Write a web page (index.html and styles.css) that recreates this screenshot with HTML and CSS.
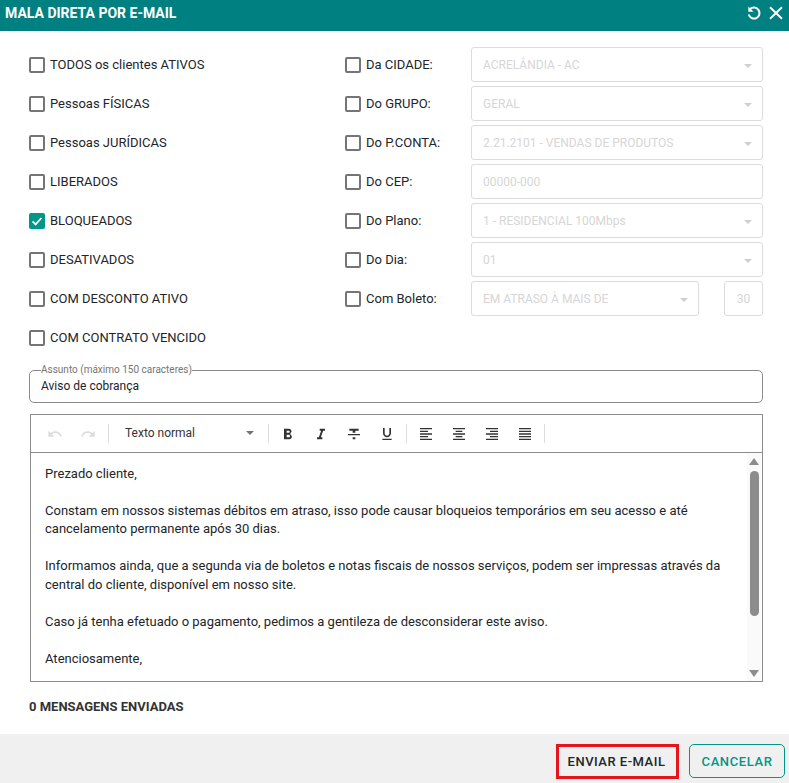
FILE: index.html
```html
<!DOCTYPE html>
<html lang="pt-BR">
<head>
<meta charset="utf-8">
<title>Mala direta por e-mail</title>
<link rel="stylesheet" href="styles.css">
</head>
<body>
<div class="dialog">
  <header class="title-bar">
    <h1 class="title">MALA DIRETA POR E-MAIL</h1>
    <div class="title-actions">
      <svg class="icon-reset" viewBox="0 0 16 16" width="16" height="16"><path d="M4 4.300A5.500 5.500 0 1 1 2.700 9.600" fill="none" stroke="#fff" stroke-width="2"/><path d="M2.300 1.400v5.300h5.300z" fill="#fff"/></svg>
      <svg class="icon-close" viewBox="0 0 14 14" width="14" height="14"><path d="M1 1.200l12 11.600M13 1.200L1 12.800" fill="none" stroke="#fff" stroke-width="1.900"/></svg>
    </div>
  </header>

  <main class="content">
    <section class="filters">
      <div class="col-left">
        <label class="check-row"><span class="box"></span>TODOS os clientes ATIVOS</label>
        <label class="check-row"><span class="box"></span>Pessoas FÍSICAS</label>
        <label class="check-row"><span class="box"></span>Pessoas JURÍDICAS</label>
        <label class="check-row"><span class="box"></span>LIBERADOS</label>
        <label class="check-row"><span class="box checked"><svg viewBox="0 0 16 16" width="16" height="16"><path d="M3.600 8.400l3 3 5.800-6.400" fill="none" stroke="#fff" stroke-width="1.700"/></svg></span>BLOQUEADOS</label>
        <label class="check-row"><span class="box"></span>DESATIVADOS</label>
        <label class="check-row"><span class="box"></span>COM DESCONTO ATIVO</label>
        <label class="check-row"><span class="box"></span>COM CONTRATO VENCIDO</label>
      </div>
      <div class="col-right">
        <div class="field-row"><label class="check-row field-label"><span class="box"></span>Da CIDADE:</label><div class="control">ACRELÂNDIA - AC<i class="caret"></i></div></div>
        <div class="field-row"><label class="check-row field-label"><span class="box"></span>Do GRUPO:</label><div class="control">GERAL<i class="caret"></i></div></div>
        <div class="field-row"><label class="check-row field-label"><span class="box"></span>Do P.CONTA:</label><div class="control">2.21.2101 - VENDAS DE PRODUTOS<i class="caret"></i></div></div>
        <div class="field-row"><label class="check-row field-label"><span class="box"></span>Do CEP:</label><div class="control">00000-000</div></div>
        <div class="field-row"><label class="check-row field-label"><span class="box"></span>Do Plano:</label><div class="control">1 - RESIDENCIAL 100Mbps<i class="caret"></i></div></div>
        <div class="field-row"><label class="check-row field-label"><span class="box"></span>Do Dia:</label><div class="control">01<i class="caret"></i></div></div>
        <div class="field-row"><label class="check-row field-label"><span class="box"></span>Com Boleto:</label><div class="control">EM ATRASO À MAIS DE<i class="caret"></i></div><div class="control days">30</div></div>
      </div>
    </section>

    <fieldset class="subject">
      <legend class="subject-legend">Assunto (máximo 150 caracteres)</legend>
      <div class="subject-value">Aviso de cobrança</div>
    </fieldset>

    <section class="editor">
      <div class="toolbar">
        <div class="tool-group history">
          <svg class="tool" viewBox="0 0 24 24"><path fill="#ddd" d="M12.500 8c-2.650 0-5.050.990-6.900 2.600L2 7v9h9l-3.620-3.620c1.390-1.160 3.160-1.880 5.120-1.880 3.540 0 6.550 2.310 7.600 5.500l2.370-.780C21.080 11.030 17.150 8 12.500 8z"/></svg>
          <svg class="tool" viewBox="0 0 24 24"><path fill="#ddd" d="M18.400 10.600C16.550 8.990 14.150 8 11.500 8c-4.650 0-8.580 3.030-9.960 7.220L3.900 16c1.050-3.190 4.050-5.500 7.600-5.500 1.950 0 3.730.720 5.120 1.880L13 16h9V7l-3.600 3.600z"/></svg>
        </div>
        <div class="tool-group block-type">Texto normal<i class="caret dark"></i></div>
        <div class="tool-group wide">
          <svg class="tool" viewBox="0 0 24 24"><path fill="#333" d="M15.600 10.790c.970-.670 1.650-1.770 1.650-2.790 0-2.260-1.750-4-4-4H6v16h8.040c2.090 0 3.710-1.700 3.710-3.790 0-1.520-.860-2.820-2.150-3.420zM10 7h3c.830 0 1.500.670 1.500 1.500S13.830 10 13 10h-3V7zm3.500 10H10v-4h3.500c.830 0 1.500.900 1.500 2s-.670 2-1.500 2z"/></svg>
          <svg class="tool" viewBox="0 0 24 24"><path fill="#333" d="M10 4v3h2.210l-3.420 10H6v3h8v-3h-2.210l3.420-10H18V4z"/></svg>
          <svg class="tool" viewBox="0 0 24 24"><path fill="#333" d="M10 20h4v-3h-4v3zM5 4v3h5v3h4V7h5V4H5zM3 14h18v-2H3v2z"/></svg>
          <svg class="tool" viewBox="0 0 24 24"><path fill="#333" d="M12 17c3.310 0 6-2.690 6-6V3h-2.500v8c0 1.930-1.570 3.500-3.500 3.500S8.500 12.930 8.500 11V3H6v8c0 3.310 2.690 6 6 6zm-7 2v2h14v-2H5z"/></svg>
        </div>
        <div class="tool-group wide">
          <svg class="tool" viewBox="0 0 24 24"><path fill="#333" d="M15 15H3v2h12v-2zm0-8H3v2h12V7zM3 13h18v-2H3v2zm0 8h18v-2H3v2zM3 3v2h18V3H3z"/></svg>
          <svg class="tool" viewBox="0 0 24 24"><path fill="#333" d="M7 15v2h10v-2H7zm-4 6h18v-2H3v2zm0-8h18v-2H3v2zm4-6v2h10V7H7zM3 3v2h18V3H3z"/></svg>
          <svg class="tool" viewBox="0 0 24 24"><path fill="#333" d="M3 21h18v-2H3v2zm6-4h12v-2H9v2zm-6-4h18v-2H3v2zm6-4h12V7H9v2zM3 3v2h18V3H3z"/></svg>
          <svg class="tool" viewBox="0 0 24 24"><path fill="#333" d="M3 21h18v-2H3v2zm0-4h18v-2H3v2zm0-4h18v-2H3v2zm0-4h18V7H3v2zm0-6v2h18V3H3z"/></svg>
        </div>
      </div>
      <div class="editor-body">
        <div class="editor-text">
          <p>Prezado cliente,</p>
          <p>&nbsp;</p>
          <p>Constam em nossos sistemas débitos em atraso, isso pode causar bloqueios temporários em seu acesso e até cancelamento permanente após 30 dias.</p>
          <p>&nbsp;</p>
          <p>Informamos ainda, que a segunda via de boletos e notas fiscais de nossos serviços, podem ser impressas através da central do cliente, disponível em nosso site.</p>
          <p>&nbsp;</p>
          <p>Caso já tenha efetuado o pagamento, pedimos a gentileza de desconsiderar este aviso.</p>
          <p>&nbsp;</p>
          <p>Atenciosamente,</p>
        </div>
        <div class="scrollbar">
          <i class="arrow up"></i>
          <div class="thumb"></div>
          <i class="arrow down"></i>
        </div>
      </div>
    </section>

    <p class="sent-count">0 MENSAGENS ENVIADAS</p>
  </main>

  <footer class="footer">
    <button class="btn btn-send" type="button">ENVIAR E-MAIL</button>
    <button class="btn btn-cancel" type="button">CANCELAR</button>
  </footer>
</div>
</body>
</html>
```

FILE: styles.css
```css
* { box-sizing: border-box; }
html, body { margin: 0; padding: 0; height: 100%; background: #fff; }
body { font-family: Roboto, "Liberation Sans", sans-serif; font-size: 13px; color: #212529; overflow: hidden; }

.dialog { width: 789px; height: 783px; display: flex; flex-direction: column; }

.title-bar { height: 31px; flex: none; background: #008080; display: flex; align-items: center; justify-content: space-between; padding: 0 6px 5px 5px; color: #fff; }
.title { margin: 0; font-size: 14px; font-weight: 700; line-height: 26px; }
.title-actions { display: flex; align-items: center; gap: 7px; }
.title-actions svg { display: block; }

.content { flex: 1; padding: 16px 26px 0 29px; min-height: 0; }

.filters { display: flex; }
.col-left { width: 316px; flex: none; display: flex; flex-direction: column; gap: 4px; }
.col-right { flex: 1; display: flex; flex-direction: column; gap: 4px; }

.check-row { display: flex; align-items: center; height: 35px; gap: 5px; }
.box { width: 16px; height: 16px; flex: none; border: 2px solid #757575; border-radius: 2px; display: block; background: #fff; }
.box.checked { background: #009688; border: 0; }
.box svg { display: block; }

.field-row { display: flex; align-items: center; }
.field-label { width: 126px; flex: none; }
.control { position: relative; flex: 1; height: 35px; border: 1px solid #dcdcdc; border-radius: 3px; padding: 0 11px; line-height: 34px; font-size: 12px; color: #d6d6d6; }
.days { flex: none; width: 39px; margin-left: 25px; text-align: center; padding: 0; }
.caret { position: absolute; right: 10px; top: 16px; width: 0; height: 0; border-left: 4px solid transparent; border-right: 4px solid transparent; border-top: 4px solid #cfcfcf; }
.caret.dark { right: 14px; top: 7px; border-top-color: #757575; }

.subject { margin: 10px 0 0; padding: 0 11px; height: 38px; width: 734px; border: 1px solid #8c8c8c; border-radius: 5px; min-width: 0; }
.subject-legend { padding: 0; margin-left: 0; font-size: 10px; line-height: 10px; color: #757575; }
.subject-value { line-height: 18px; margin-top: 2px; color: #212529; font-size: 12px; }

.editor { margin: 11px 0 0 1px; width: 733px; height: 268px; border: 1px solid #8c8c8c; display: flex; flex-direction: column; }
.toolbar { height: 38px; flex: none; border-bottom: 1px solid #8c8c8c; display: flex; align-items: center; padding-left: 16px; }
.tool-group { display: flex; align-items: center; gap: 17px; height: 19px; padding-right: 10px; margin-right: 11px; border-right: 1px solid #dcdcdc; }
.history { padding-right: 12px; }
.wide { padding-right: 11px; }
.tool { width: 16px; height: 16px; display: block; }
.block-type { position: relative; width: 150px; font-size: 12px; color: #333; gap: 0; padding: 0 10px 2px 6px; margin-left: -1px; }

.editor-body { flex: 1; min-height: 0; display: flex; overflow: hidden; }
.editor-text { flex: 1; padding: 12px 15px 0 14px; line-height: 18.47px; font-size: 13px; }
.editor-text p { margin: 0; }
.scrollbar { width: 14px; margin-right: 1px; flex: none; background: #fafafa; display: flex; flex-direction: column; align-items: center; padding-top: 5px; }
.arrow { width: 0; height: 0; border-left: 5px solid transparent; border-right: 5px solid transparent; display: block; flex: none; }
.arrow.up { border-bottom: 7px solid #8c8c8c; }
.arrow.down { border-top: 7px solid #8c8c8c; margin-top: 54px; }
.thumb { width: 9px; height: 145px; margin-top: 6px; background: #8c8c8c; border-radius: 5px; flex: none; }

.sent-count { margin: 18px 0 0; font-size: 13px; font-weight: 700; line-height: 14px; color: #333; }

.footer { height: 49px; flex: none; background: #f0f0f0; display: flex; align-items: flex-start; gap: 10px; padding: 10px 4px 0 556px; }
.btn { height: 35px; font-family: inherit; font-size: 13px; font-weight: 500; letter-spacing: .6px; border-radius: 0; background: transparent; padding: 0; }
.btn-send { width: 123px; border: 3px solid #e8141c; color: #212529; letter-spacing: .5px; padding-right: 2px; }
.btn-cancel { width: 96px; height: 34px; border: 1px solid #009688; color: #009688; border-radius: 5px; }
```
